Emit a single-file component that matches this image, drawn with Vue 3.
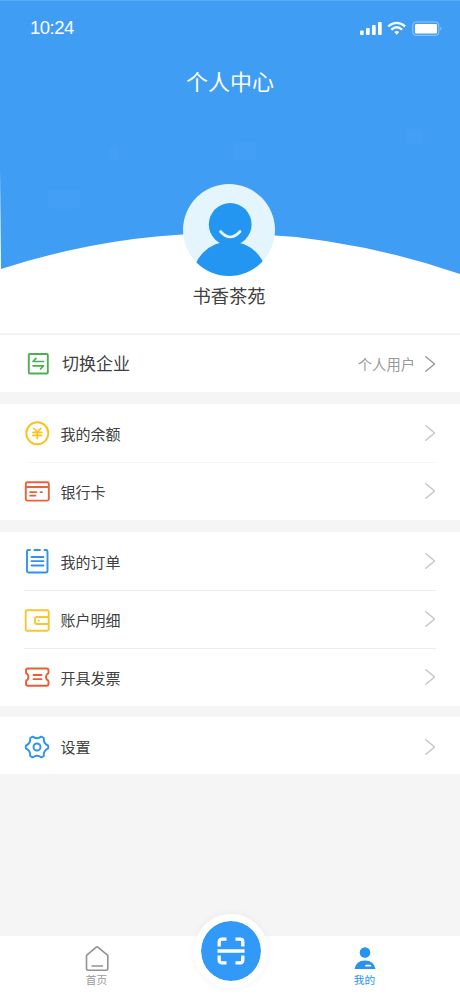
<script setup>
const groups = [
  [
    { label: '我的余额', icon: 'coin' },
    { label: '银行卡', icon: 'card' }
  ],
  [
    { label: '我的订单', icon: 'order' },
    { label: '账户明细', icon: 'wallet' },
    { label: '开具发票', icon: 'ticket' }
  ],
  [{ label: '设置', icon: 'gear' }]
]
</script>

<template>
  <div class="page">
    <header class="hero">
      <svg class="hero-bg" viewBox="0 0 460 333" aria-hidden="true">
        <path d="M0 0H460V274Q230 195 1 269L0 168Z" fill="#3f9df3" />
        <path d="M0 .5H460" stroke="#59aaf5" />
        <g fill="#459ff6" opacity=".75">
          <rect x="48" y="190" width="32" height="19" rx="4" />
          <rect x="109" y="146" width="10" height="15" rx="3" />
          <rect x="233" y="142" width="23" height="18" rx="4" />
          <rect x="405" y="129" width="18" height="15" rx="4" />
        </g>
      </svg>
      <div class="status">
        <span class="time">10:24</span>
        <svg class="signals" width="84" height="18" viewBox="0 0 84 18" aria-hidden="true">
          <g fill="#fff">
            <rect x="2" y="10.500" width="3.700" height="4.500" rx="1" />
            <rect x="8" y="8" width="3.700" height="7" rx="1" />
            <rect x="14" y="5" width="3.700" height="10" rx="1" />
            <rect x="20" y="2" width="3.700" height="13" rx="1" />
            <path d="M36.200 11.900Q38.700 10 41.200 11.900L38.700 14.800Z" />
            <rect x="57" y="4" width="22" height="9.500" rx="1.200" />
          </g>
          <path d="M30.300 6.300Q38.700-.6 47.100 6.300M33.300 9.600Q38.700 5 44.100 9.600" fill="none" stroke="#fff" stroke-width="2.300" />
          <rect x="54.800" y="2" width="26" height="13.300" rx="3" fill="none" stroke="#fff" stroke-opacity=".45" />
          <path d="M82.300 6.500Q84.500 8.500 82.300 10.800Z" fill="#fff" opacity=".45" />
        </svg>
      </div>
      <h1>个人中心</h1>
      <svg class="avatar" width="92" height="92" viewBox="0 0 92 92" aria-hidden="true">
        <defs><clipPath id="face"><circle cx="46" cy="46" r="46" /></clipPath></defs>
        <circle cx="46" cy="46" r="46" fill="#e5f5fe" />
        <g clip-path="url(#face)" fill="#2396f2">
          <circle cx="47.200" cy="40.400" r="21.400" />
          <circle cx="46.800" cy="95" r="37.500" />
        </g>
        <path d="M37.500 47.500Q47.200 58.500 57 47.500" fill="none" stroke="#e9f7ff" stroke-width="2.700" stroke-linecap="round" />
      </svg>
      <div class="name">书香茶苑</div>
    </header>

    <main>
      <section class="group">
        <div class="row switch">
          <svg class="icon" width="26" height="26" viewBox="0 0 26 26" aria-hidden="true">
            <g fill="none" stroke="#4caf50" stroke-width="1.900" stroke-linecap="round" stroke-linejoin="round">
              <rect x="4.800" y="3" width="19" height="19.500" rx="1" />
              <path d="M19.500 10.500H9L12 7.300M9 14.800H19.500L16.500 18" stroke-width="1.700" />
            </g>
          </svg>
          <span class="label">切换企业</span>
          <span class="value">个人用户</span>
          <svg class="arrow" width="12" height="18" viewBox="0 0 12 18" aria-hidden="true"><path d="M1.300 1.300L10.500 9L1.300 16.700" /></svg>
        </div>
      </section>

      <section v-for="(group, g) in groups" :key="g" class="group" :class="'group-' + g">
        <div v-for="item in group" :key="item.label" class="row">
          <svg class="icon" width="26" height="26" viewBox="0 0 26 26" fill="none" stroke-width="1.900" stroke-linecap="round" stroke-linejoin="round" aria-hidden="true">
            <g v-if="item.icon === 'coin'" stroke="#fbc21b">
              <circle cx="13.300" cy="13.300" r="11" />
              <path d="M9.800 8.500L13.300 12L16.800 8.500M13.300 12V18.500M8.800 12.300H17.800M8.800 15.400H17.800" stroke-width="1.700" />
            </g>
            <g v-else-if="item.icon === 'card'" stroke="#ec6138">
              <rect x="1.800" y="4.300" width="23" height="18.300" rx="1.500" />
              <path d="M2.500 9H24" />
              <path d="M6 14.200H12.500M16.500 14.200H18M6 17.700H11.500" stroke-width="1.700" />
            </g>
            <g v-else-if="item.icon === 'order'" stroke="#2f93ed">
              <path d="M6 2H4.500Q3 2 3 3.500V23Q3 24.500 4.500 24.500H22Q23.500 24.500 23.500 23V3.500Q23.500 2 22 2H20.500M10.500 2H16" />
              <path d="M7.500 9H19.500M7.500 13.200H19.500M7.500 17.500H19.500" stroke-width="1.800" />
            </g>
            <g v-else-if="item.icon === 'wallet'" stroke="#f8c62d">
              <rect x="1.700" y="4.300" width="23" height="20.500" rx="1.500" />
              <path d="M24 11H13Q11 11 11 13V16Q11 18 13 18H24" />
              <circle cx="14.600" cy="14.600" r=".6" stroke-width="1" />
            </g>
            <g v-else-if="item.icon === 'ticket'" stroke="#ec5c34">
              <path d="M4 4.500H22.500Q24.500 4.500 24.500 6.500V8.500Q24.500 9.800 23.200 10Q20.800 13 23.200 16Q24.500 16.200 24.500 17.500V19.800Q24.500 21.800 22.500 21.800H4Q2 21.800 2 19.800V17.500Q2 16.200 3.300 16Q5.700 13 3.300 10Q2 9.800 2 8.500V6.500Q2 4.500 4 4.500Z" />
              <path d="M9.500 11H17.500M9.500 15.200H17.500" stroke-width="1.800" />
            </g>
            <g v-else stroke="#2f93ed">
              <path d="M24.200 12.700V15.300Q19.100 17.500 19.800 23L17.400 24.400Q13 21 8.600 24.400L6.200 23Q6.900 17.500 1.800 15.300V12.700Q6.900 10.500 6.200 5L8.600 3.600Q13 7 17.400 3.600L19.800 5Q19.100 10.500 24.200 12.700Z" />
              <circle cx="13" cy="14" r="3.500" />
            </g>
          </svg>
          <span class="label">{{ item.label }}</span>
          <svg class="arrow" width="12" height="18" viewBox="0 0 12 18" aria-hidden="true"><path d="M1.300 1.300L10.500 9L1.300 16.700" /></svg>
        </div>
      </section>
    </main>

    <nav class="tabs">
      <div class="tab home">
        <svg width="26" height="27" viewBox="0 0 26 27" aria-hidden="true">
          <path d="M2.500 10.300L12.200 2.200Q13 1.500 13.800 2.200L23.800 10.300V23.500Q23.800 25.200 22 25.200H4.200Q2.500 25.200 2.500 23.500ZM8 21H18.500" fill="none" stroke="#909294" stroke-width="1.600" stroke-linejoin="round" stroke-linecap="round" />
        </svg>
        <span>首页</span>
      </div>
      <div class="scan">
        <svg width="28" height="28" viewBox="0 0 28 28" aria-hidden="true">
          <path d="M2.200 9.500V4.700Q2.200 2.200 4.700 2.200H9.500M18.500 2.200H23.300Q25.800 2.200 25.800 4.700V9.500M25.800 18.500V23.300Q25.800 25.800 23.300 25.800H18.500M9.500 25.800H4.700Q2.200 25.800 2.200 23.300V18.500M.5 14H27.500" fill="none" stroke="#fff" stroke-width="3.300" />
        </svg>
      </div>
      <div class="tab mine">
        <svg width="26" height="27" viewBox="0 0 26 27" aria-hidden="true">
          <circle cx="13" cy="7.500" r="5.300" fill="#2792f0" />
          <path d="M2.500 24Q4 15.500 13 15.500T23.500 24Z" fill="#2792f0" />
          <path d="M14 20.700H18.500" stroke="#fff" stroke-width="1.700" stroke-linecap="round" />
        </svg>
        <span>我的</span>
      </div>
    </nav>
  </div>
</template>

<style>
body { margin: 0; }
</style>

<style scoped>
.page {
  display: flex;
  flex-direction: column;
  width: 460px;
  height: 996px;
  overflow: hidden;
  background: #f5f5f5;
  color: #404040;
  font-family: "Noto Sans CJK SC", sans-serif;
}
.hero {
  position: relative;
  display: flex;
  flex-direction: column;
  align-items: center;
  height: 333px;
  flex: none;
  background: #fff;
}
.hero-bg { position: absolute; inset: 0; width: 460px; height: 333px; }
.status {
  position: relative;
  display: flex;
  justify-content: space-between;
  align-items: center;
  box-sizing: border-box;
  width: 100%;
  height: 56px;
  padding: 0 18px 0 30px;
}
.time { color: #fff; font: 18.500px/20px "Liberation Sans", sans-serif; letter-spacing: -.5px; }
.signals { margin-top: 1px; }
h1 { position: relative; margin: 8px 0 0; color: #fff; font-size: 22px; line-height: 32px; font-weight: 400; }
.avatar { position: relative; margin-top: 88px; margin-right: 2px; }
.name { position: relative; margin-top: 6px; margin-right: 2px; font-size: 18.300px; line-height: 26px; }
.group { background: #fff; margin-bottom: 12px; }
.row {
  position: relative;
  display: flex;
  align-items: center;
  box-sizing: border-box;
  height: 58px;
  padding: 0 24px;
}
.row + .row::before {
  content: "";
  position: absolute;
  top: 0;
  left: 24px;
  right: 24px;
  height: 1px;
  background: #ececec;
}
.group-0 .row + .row::before { left: 28px; background: #f7f7f7; }
.icon { flex: none; }
.label { flex: 1; margin: 1px 0 0 10.500px; font-size: 15px; line-height: 24px; }
.arrow { flex: none; fill: none; stroke: #c6c6c6; stroke-width: 1.400; }
.switch { height: 59px; border-top: 2px solid #f3f3f3; }
.switch .label { margin: -2px 0 0 12px; font-size: 17px; }
.switch .value { margin: 0 9px 0 0; color: #999; font-size: 14.300px; line-height: 24px; }
.switch .arrow { stroke: #999; }
.group-1 { margin-bottom: 11px; }
.group-2 { margin: 0; }
.group-2 .row { height: 57px; }
.group-2 .label { margin-top: 3px; }
.group-2 .arrow { margin-top: 2px; }
.tabs {
  display: grid;
  grid-template-columns: 193px 76px 191px;
  height: 60px;
  margin-top: auto;
  background: #fff;
}
.tab { display: flex; flex-direction: column; align-items: center; padding-top: 9px; font-size: 10.700px; line-height: 16px; color: #999; }
.mine { color: #2792f0; }
.tab span { margin-top: 0; }
.scan {
  display: flex;
  align-items: center;
  justify-content: center;
  box-sizing: border-box;
  width: 74px;
  height: 74px;
  margin: -22px 0 0 1px;
  border: 7.500px solid #fff;
  border-radius: 50%;
  background: #3199f8;
  background-clip: padding-box;
  box-shadow: 0 0 8px rgba(0, 0, 0, .05);
}
</style>
